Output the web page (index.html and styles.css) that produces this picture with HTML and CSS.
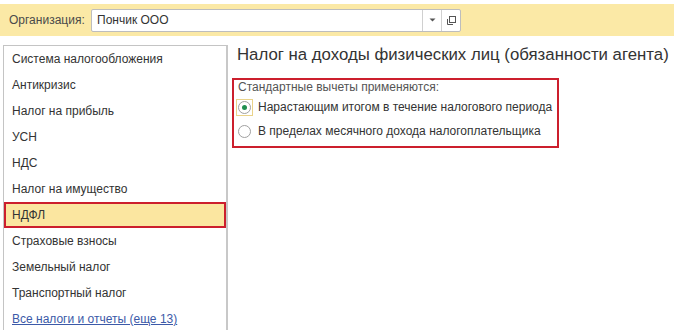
FILE: index.html
```html
<!DOCTYPE html>
<html>
    <head>
        <meta charset="UTF-8">
        <title>НДФЛ</title>
        <link rel="stylesheet" href="styles.css">
    </head>

    <body>
        <div class="top-bar">
            <span class="org-label">Организация:</span>
            <div class="org-field">
                <div class="org-input">Пончик ООО</div>
                <div class="field-button">
                    <svg width="7" height="4" viewBox="0 0 7 4"><path d="M0.5 0.5 L6.5 0.5 L3.5 3.5 Z" fill="#555"/></svg>
                </div>
                <div class="field-button">
                    <svg width="11" height="11" viewBox="0 0 11 11">
                        <rect x="3.5" y="1.5" width="6" height="6" fill="none" stroke="#555"/>
                        <path d="M1.5 4 L1.5 9.5 L7 9.5" fill="none" stroke="#555"/>
                    </svg>
                </div>
            </div>
        </div>

        <div class="main">
            <!-- список разделов -->
            <ul class="side-list">
                <li>Система налогообложения</li>
                <li>Антикризис</li>
                <li>Налог на прибыль</li>
                <li>УСН</li>
                <li>НДС</li>
                <li>Налог на имущество</li>
                <li class="selected">НДФЛ</li>
                <li>Страховые взносы</li>
                <li>Земельный налог</li>
                <li>Транспортный налог</li>
                <li><a class="more-link" href="#">Все налоги и отчеты (еще 13)</a></li>
            </ul>

            <div class="content">
                <h1 class="page-title">Налог на доходы физических лиц (обязанности агента)</h1>
                <div class="deductions-box">
                    <div class="group-title">Стандартные вычеты применяются:</div>
                    <div class="radio-row">
                        <span class="radio-focus"><span class="radio checked"></span></span>
                        <span>Нарастающим итогом в течение налогового периода</span>
                    </div>
                    <div class="radio-row">
                        <span class="radio-focus no-focus"><span class="radio"></span></span>
                        <span>В пределах месячного дохода налогоплательщика</span>
                    </div>
                </div>
            </div>
        </div>
    </body>
</html>
```

FILE: styles.css
```css
html{
    height: 100%;
}
body{
    height: 100%;
    margin: 0;
    overflow: hidden;
    background: #fff;
    color: #404040;
    font-family: "Liberation Sans", Arial, sans-serif;
    font-size: 12px;
}

/* верхняя панель с организацией */
.top-bar{
    display: flex;
    align-items: center;
    margin-top: 4px;
    height: 32px;
    padding-left: 9px;
    background: #fbe9a6;
}
.org-label{
    width: 82px;
    color: #4a4a4a;
}
.org-field{
    display: flex;
    height: 23px;
    border: 1px solid #bdbdbd;
    border-radius: 2px;
    background: #fff;
    box-sizing: border-box;
}
.org-input{
    width: 325px;
    padding-left: 5px;
    line-height: 21px;
    border-right: 1px solid #d0d0d0;
    color: #333;
}
.field-button{
    display: flex;
    width: 18px;
    justify-content: center;
    align-items: center;
    border-right: 1px solid #d0d0d0;
}
.field-button:last-child{
    border-right: none;
}

.main{
    display: flex;
    margin-top: 9px;
}

/* левый список */
.side-list{
    flex-shrink: 0;
    width: 225px;
    height: 300px;
    margin: 0 0 0 3px;
    padding: 0;
    list-style: none;
    border: 1px solid #c4c4c4;
    border-right: 2px solid #c8c8c8;
    box-sizing: border-box;
}
.side-list li{
    height: 26px;
    line-height: 26px;
    padding-left: 8px;
    color: #333;
    box-sizing: border-box;
}
.side-list li.selected{
    line-height: 22px;
    padding-left: 6px;
    border: 2px solid #cc1f2d;
    background: #fbe6a0;
}
.more-link{
    color: #3c5aa8;
    text-decoration: underline;
}

/* правая часть */
.content{
    flex: 1;
    margin-left: 4px;
    white-space: nowrap;
}
.page-title{
    margin: 0;
    padding-left: 5px;
    height: 20px;
    line-height: 20px;
    font-size: 16.8px;
    font-weight: normal;
    color: #333;
}
.deductions-box{
    width: 327px;
    margin-top: 13px;
    padding: 0 0 3px 2px;
    border: 2px solid #cc1f2d;
    box-sizing: border-box;
}
.group-title{
    height: 15px;
    line-height: 15px;
    padding-left: 2px;
    color: #555;
}
.radio-row{
    display: flex;
    align-items: center;
    gap: 5px;
    height: 24px;
    color: #333;
}
.radio-focus{
    display: flex;
    width: 17px;
    height: 17px;
    justify-content: center;
    align-items: center;
    border: 1px solid #ead38a;
    box-sizing: border-box;
}
.radio-focus.no-focus{
    border-color: transparent;
}
.radio{
    width: 13px;
    height: 13px;
    border: 1px solid #a0a0a0;
    border-radius: 50%;
    box-sizing: border-box;
    display: flex;
    justify-content: center;
    align-items: center;
    background: #fff;
}
.radio.checked::after{
    content: "";
    width: 5px;
    height: 5px;
    border-radius: 50%;
    background: #1f8f4f;
}
```
